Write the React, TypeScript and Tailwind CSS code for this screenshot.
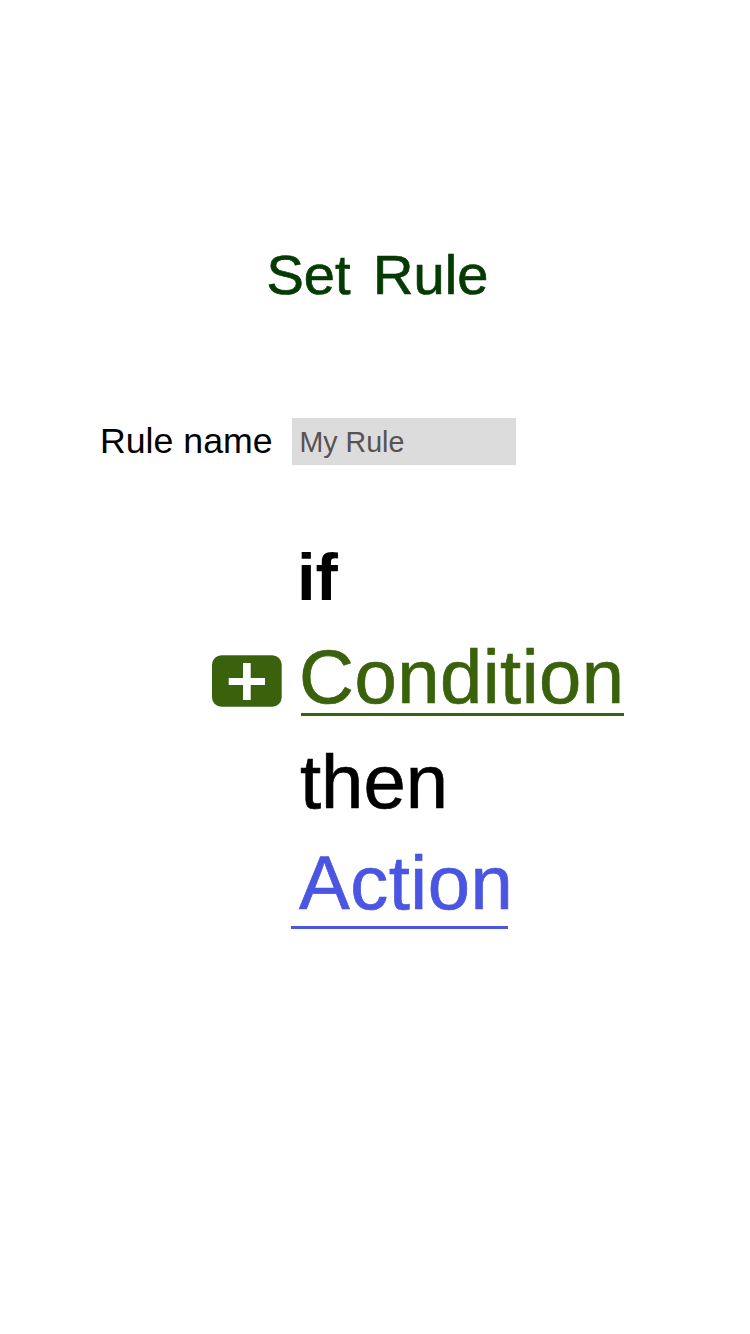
import { useState } from "react";

function AddConditionIcon() {
  return (
    <svg width="70" height="52" viewBox="0 0 70 52" aria-hidden="true">
      <rect y="0.300" width="69.700" height="51.400" rx="9.500" fill="#3a610b" />
      <path d="M31 8h7.700v15h14.300v7h-14.300v15h-7.700v-15h-14.300v-7h14.300z" fill="#fff" />
    </svg>
  );
}

export default function App() {
  const [name, setName] = useState("My Rule");

  return (
    <main className="h-[1334px] w-[750px] overflow-hidden bg-white pt-[245px] font-['Liberation_Sans',Arial,sans-serif] text-black">
      <h1 className="ml-[266.500px] h-[60px] text-[56px] leading-[60px] whitespace-nowrap text-[#053a03] [word-spacing:7px] [-webkit-text-stroke:0.7px_#053a03]">
        Set Rule
      </h1>

      <div className="mt-[113px] flex h-[47px] items-center">
        <label htmlFor="rule-name" className="ml-[100px] w-[192px] shrink-0 pb-px text-[35.700px] leading-[46px] whitespace-nowrap">
          Rule name
        </label>
        <input
          id="rule-name"
          value={name}
          onChange={(e) => setName(e.target.value)}
          className="h-[47px] w-[224px] bg-[#dcdcdc] px-[7.500px] pt-[2px] text-[28.600px] text-[#595252] outline-none"
        />
      </div>

      <p className="mt-[72px] ml-[297px] h-[80px] text-[67px] leading-[80px] font-bold">if</p>

      <div className="mt-[19px] flex h-[80px]">
        <button type="button" aria-label="Add condition" className="mt-[19px] ml-[212px] h-[52px] w-[70px]">
          <AddConditionIcon />
        </button>
        <a className="ml-[19px] h-[80px] w-[323px] border-b-3 border-[#3a610b] text-[76px] leading-[82px] whitespace-nowrap text-[#3a610b] [-webkit-text-stroke:0.7px_#3a610b]">
          <span className="-ml-[2px] block tracking-[0.500px]">Condition</span>
        </a>
      </div>

      <p className="mt-[25px] ml-[300px] h-[80px] text-[76px] leading-[82px] [-webkit-text-stroke:0.7px_#000]">then</p>

      <a className="mt-[21px] ml-[291px] block h-[87px] w-[217px] border-b-3 border-[#4a56e2] text-[76px] leading-[82px] whitespace-nowrap text-[#4a56e2] [-webkit-text-stroke:0.7px_#4a56e2]">
        <span className="ml-[8px] block tracking-[0.500px]">Action</span>
      </a>
    </main>
  );
}
